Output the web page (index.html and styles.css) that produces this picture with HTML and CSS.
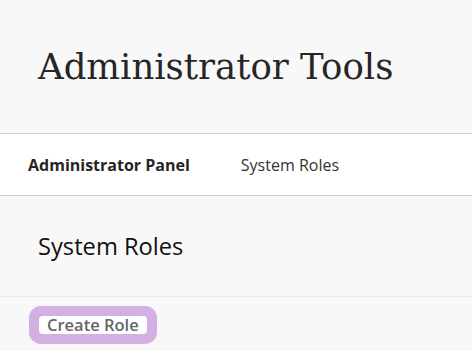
FILE: index.html
```html
<!DOCTYPE html>
<html>
<head>
<meta charset="utf-8">
<link rel="stylesheet" href="styles.css">
</head>
<body>
<header class="page-header">
  <h1 class="page-title">Administrator Tools</h1>
</header>
<nav class="breadcrumbs">
  <span class="crumb crumb-strong">Administrator Panel</span>
  <span class="crumb">System Roles</span>
</nav>
<section class="content">
  <h2 class="section-title">System Roles</h2>
  <div class="actions">
    <button class="btn">Create Role</button>
  </div>
</section>
</body>
</html>
```

FILE: styles.css
```css
* { box-sizing: border-box; }
html, body {
  margin: 0;
  padding: 0;
  background: #f8f8f8;
  font-family: "Open Sans", "Noto Sans", sans-serif;
  color: #262626;
}
.page-header {
  height: 134px;
  border-bottom: 1px solid #cdcdcd;
  display: flex;
  align-items: center;
  padding: 0 38px;
}
.page-title {
  margin: 0;
  font-family: "DejaVu Serif", "Liberation Serif", serif;
  font-weight: normal;
  font-size: 35.5px;
  color: #262626;
}
.breadcrumbs {
  height: 62px;
  background: #fff;
  border-bottom: 1px solid #cdcdcd;
  display: flex;
  align-items: center;
  padding: 0 28px;
  gap: 51px;
  font-size: 16px;
}
.crumb { color: #333; }
.crumb-strong { font-weight: 700; color: #262626; }
.section-title {
  margin: 0;
  height: 101px;
  display: flex;
  align-items: center;
  padding: 0 38px;
  font-weight: normal;
  font-size: 23.7px;
  color: #111;
  border-bottom: 1px solid #e8e8e8;
}
.actions {
  display: flex;
  padding: 19px 39px;
}
.btn {
  font-family: "Open Sans", sans-serif;
  font-weight: 600;
  font-size: 16.5px;
  line-height: 18px;
  color: #666;
  background: #fff;
  border: none;
  border-radius: 4px;
  padding: 0 8px;
  height: 18px;
  box-shadow: 0 0 0 10px #d3b0e3;
  outline: none;
}
```
